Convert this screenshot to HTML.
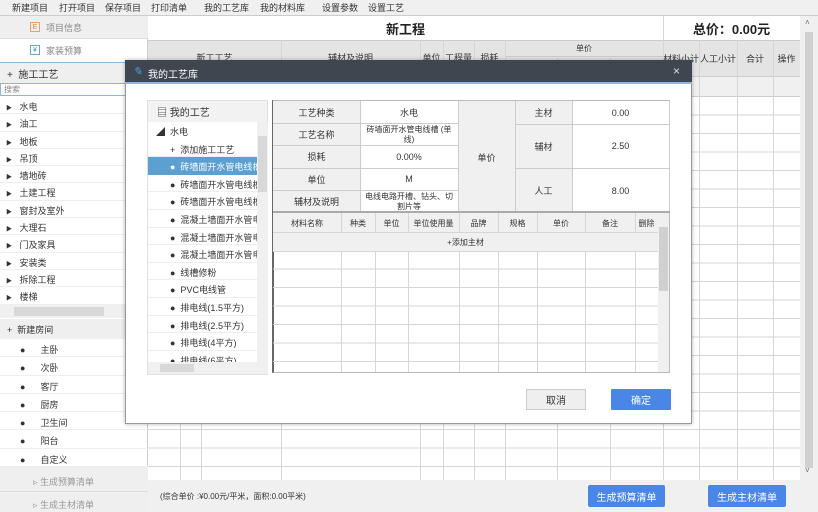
<!DOCTYPE html>
<html><head><meta charset="utf-8"><style>
*{margin:0;padding:0;box-sizing:border-box}
body{width:818px;height:512px;overflow:hidden;background:#fff;font-family:"Liberation Sans","Noto Sans CJK SC",sans-serif;font-size:9px;color:#333;position:relative}
.a{position:absolute}
.c{display:flex;align-items:center;justify-content:center;text-align:center}
.vl{position:absolute;width:1px;background:#d6d6d6}
.hl{position:absolute;height:1px;background:#d6d6d6}
.tr{font-size:6px}
</style></head><body>
<!-- toolbar -->
<div class="a" style="left:0;top:0;width:818px;height:16px;background:#f0f0f0;border-bottom:1px solid #ccc"></div>
<div class="a" style="top:1px;left:0;font-size:9px;color:#333;white-space:nowrap">
<span class="a" style="left:12px">新建项目</span><span class="a" style="left:59px">打开项目</span><span class="a" style="left:105px">保存项目</span><span class="a" style="left:151px">打印清单</span><span class="a" style="left:204px">我的工艺库</span><span class="a" style="left:260px">我的材料库</span><span class="a" style="left:322px">设置参数</span><span class="a" style="left:368px">设置工艺</span></div>
<!-- left sidebar -->
<div class="a" style="left:0;top:16px;width:148px;height:496px;background:#fff;border-right:1px solid #ccc"></div>
<div class="a" style="left:0;top:16px;width:148px;height:23px;background:#efefef;border-bottom:1px solid #ddd"></div>
<div class="a c" style="left:30px;top:22px;width:10px;height:10px;border:1px solid #f0a060;color:#f08030;font-size:7px">E</div>
<div class="a" style="left:46px;top:21px;color:#888">项目信息</div>
<div class="a c" style="left:30px;top:45px;width:10px;height:10px;border:1px solid #6ab;color:#39c;font-size:7px">¥</div>
<div class="a" style="left:46px;top:44px;color:#888">家装预算</div>
<div class="a" style="left:0;top:62px;width:148px;height:21px;background:#efefef;border-top:1px solid #8ab8d8"></div>
<div class="a" style="left:7px;top:66px;font-size:10px">+&nbsp; 施工工艺</div>
<div class="a" style="left:0;top:83px;width:148px;height:13px;border:1px solid #8ab8d8;color:#888;font-size:8px;padding-left:3px">搜索</div>
<div class="a" style="left:0;top:97px;width:148px">
<div style="height:17.3px;border-bottom:1px solid #eee;padding:3px 0 0 6px"><span class="tr">▶</span> &nbsp;&nbsp;水电</div>
<div style="height:17.3px;border-bottom:1px solid #eee;padding:3px 0 0 6px"><span class="tr">▶</span> &nbsp;&nbsp;油工</div>
<div style="height:17.3px;border-bottom:1px solid #eee;padding:3px 0 0 6px"><span class="tr">▶</span> &nbsp;&nbsp;地板</div>
<div style="height:17.3px;border-bottom:1px solid #eee;padding:3px 0 0 6px"><span class="tr">▶</span> &nbsp;&nbsp;吊顶</div>
<div style="height:17.3px;border-bottom:1px solid #eee;padding:3px 0 0 6px"><span class="tr">▶</span> &nbsp;&nbsp;墙地砖</div>
<div style="height:17.3px;border-bottom:1px solid #eee;padding:3px 0 0 6px"><span class="tr">▶</span> &nbsp;&nbsp;土建工程</div>
<div style="height:17.3px;border-bottom:1px solid #eee;padding:3px 0 0 6px"><span class="tr">▶</span> &nbsp;&nbsp;窗封及室外</div>
<div style="height:17.3px;border-bottom:1px solid #eee;padding:3px 0 0 6px"><span class="tr">▶</span> &nbsp;&nbsp;大理石</div>
<div style="height:17.3px;border-bottom:1px solid #eee;padding:3px 0 0 6px"><span class="tr">▶</span> &nbsp;&nbsp;门及家具</div>
<div style="height:17.3px;border-bottom:1px solid #eee;padding:3px 0 0 6px"><span class="tr">▶</span> &nbsp;&nbsp;安装类</div>
<div style="height:17.3px;border-bottom:1px solid #eee;padding:3px 0 0 6px"><span class="tr">▶</span> &nbsp;&nbsp;拆除工程</div>
<div style="height:17.3px;border-bottom:1px solid #eee;padding:3px 0 0 6px"><span class="tr">▶</span> &nbsp;&nbsp;楼梯</div>
</div>
<div class="a" style="left:0;top:305px;width:148px;height:13px;background:#f0f0f0"></div>
<div class="a" style="left:14px;top:307px;width:90px;height:9px;background:#d8d8d8"></div>
<div class="a" style="left:0;top:319px;width:148px;height:20px;background:#efefef"></div>
<div class="a" style="left:7px;top:323px;font-size:9px">+&nbsp; 新建房间</div>
<div class="a" style="left:0;top:339px;width:148px">
<div style="height:18.3px;border-bottom:1px solid #eee;padding:4px 0 0 20px">● &nbsp;&nbsp;&nbsp;&nbsp;&nbsp;主卧</div>
<div style="height:18.3px;border-bottom:1px solid #eee;padding:4px 0 0 20px">● &nbsp;&nbsp;&nbsp;&nbsp;&nbsp;次卧</div>
<div style="height:18.3px;border-bottom:1px solid #eee;padding:4px 0 0 20px">● &nbsp;&nbsp;&nbsp;&nbsp;&nbsp;客厅</div>
<div style="height:18.3px;border-bottom:1px solid #eee;padding:4px 0 0 20px">● &nbsp;&nbsp;&nbsp;&nbsp;&nbsp;厨房</div>
<div style="height:18.3px;border-bottom:1px solid #eee;padding:4px 0 0 20px">● &nbsp;&nbsp;&nbsp;&nbsp;&nbsp;卫生间</div>
<div style="height:18.3px;border-bottom:1px solid #eee;padding:4px 0 0 20px">● &nbsp;&nbsp;&nbsp;&nbsp;&nbsp;阳台</div>
<div style="height:18.3px;border-bottom:1px solid #eee;padding:4px 0 0 20px">● &nbsp;&nbsp;&nbsp;&nbsp;&nbsp;自定义</div>
</div>
<div class="a" style="left:0;top:467px;width:148px;height:45px;background:#efefef"></div>
<div class="a" style="left:0;top:491px;width:148px;height:1px;background:#ddd"></div>
<div class="a" style="left:33px;top:475px;color:#999">▹ 生成预算清单</div>
<div class="a" style="left:33px;top:498px;color:#999">▹ 生成主材清单</div>
<!-- main table -->
<div class="a c" style="left:148px;top:16px;width:515px;height:24px;font-size:13px;font-weight:bold;color:#222">新工程</div>
<div class="a c" style="left:663px;top:16px;width:137px;height:24px;font-size:13px;font-weight:bold;color:#222">总价：0.00元</div>
<div class="a" style="left:148px;top:40px;width:652px;height:37px;background:#e4e4e4;border-top:1px solid #ccc;border-bottom:1px solid #ccc"></div>
<div class="a" style="left:148px;top:77px;width:652px;height:20px;background:#f0f0f0;border-bottom:1px solid #ccc"></div>
<div class="a c" style="left:148px;top:50px;width:133px;height:14px">新工工艺</div>
<div class="a c" style="left:281px;top:50px;width:139px;height:14px">辅材及说明</div>
<div class="a c" style="left:420px;top:50px;width:23px;height:14px">单位</div>
<div class="a c" style="left:443px;top:50px;width:31px;height:14px">工程量</div>
<div class="a c" style="left:474px;top:50px;width:31px;height:14px">损耗</div>
<div class="hl" style="left:505px;top:56px;width:158px;background:#ccc"></div>
<div class="a c" style="left:663px;top:40px;width:36px;height:37px">材料小计</div>
<div class="a c" style="left:699px;top:40px;width:38px;height:37px">人工小计</div>
<div class="a c" style="left:737px;top:40px;width:36px;height:37px">合计</div>
<div class="a c" style="left:773px;top:40px;width:27px;height:37px">操作</div>
<div class="a c" style="left:505px;top:42px;width:158px;height:12px;font-size:8px">单价</div>
<div class="vl" style="left:281px;top:40px;height:440px"></div>
<div class="vl" style="left:420px;top:40px;height:440px"></div>
<div class="vl" style="left:443px;top:40px;height:440px"></div>
<div class="vl" style="left:474px;top:40px;height:440px"></div>
<div class="vl" style="left:505px;top:40px;height:440px"></div>
<div class="vl" style="left:663px;top:16px;height:464px"></div>
<div class="vl" style="left:699px;top:40px;height:440px"></div>
<div class="vl" style="left:737px;top:40px;height:440px"></div>
<div class="vl" style="left:773px;top:40px;height:440px"></div>
<div class="vl" style="left:180px;top:97px;height:383px"></div>
<div class="vl" style="left:201px;top:97px;height:383px"></div>
<div class="vl" style="left:557px;top:56px;height:424px"></div>
<div class="vl" style="left:610px;top:56px;height:424px"></div>
<div class="a" style="left:148px;top:97px;width:652px;height:383px;background:repeating-linear-gradient(to bottom,transparent 0,transparent 17.5px,#d6d6d6 17.5px,#d6d6d6 18.5px)"></div>
<!-- right scrollbar -->
<div class="a" style="left:800px;top:16px;width:18px;height:464px;background:#f0f0f0"></div>
<div class="a" style="left:805px;top:32px;width:8px;height:436px;background:#d0d0d0"></div>
<div class="a" style="left:805px;top:18px;font-size:8px;color:#666">˄</div>
<div class="a" style="left:805px;top:466px;font-size:8px;color:#666">˅</div>
<!-- bottom bar -->
<div class="a" style="left:148px;top:480px;width:670px;height:32px;background:#f0f0f0"></div>
<div class="a" style="left:160px;top:491px;font-size:8px;color:#333">(综合单价 :¥0.00元/平米，面积:0.00平米)</div>
<div class="a c" style="left:588px;top:485px;width:77px;height:22px;background:#4a86e8;color:#fff;font-size:10px;border-radius:2px">生成预算清单</div>
<div class="a c" style="left:708px;top:485px;width:78px;height:22px;background:#4a86e8;color:#fff;font-size:10px;border-radius:2px">生成主材清单</div>
<!-- dialog -->
<div class="a" style="left:125px;top:60px;width:567px;height:364px;background:#fff;border:1px solid #999;box-shadow:0 0 4px rgba(0,0,0,.3)"></div>
<div class="a" style="left:125px;top:60px;width:567px;height:24px;background:#3f4650;border-bottom:2px solid #8fb8dc"></div>
<div class="a" style="left:133px;top:65px;color:#4aa3e8;font-size:11px;font-style:italic">✎</div>
<div class="a" style="left:148px;top:66px;color:#fff;font-size:10px">我的工艺库</div>
<div class="a" style="left:673px;top:64px;color:#ddd;font-size:12px">×</div>
<!-- dialog left tree -->
<div class="a" style="left:147px;top:100px;width:121px;height:275px;background:#f2f2f2;border:1px solid #e0e0e0"></div>
<div class="a" style="left:157px;top:104px;font-size:10px;color:#333">▤ 我的工艺</div>
<div class="a" style="left:148px;top:122px;width:109px;height:240px;background:#fff;overflow:hidden;font-size:9px">
<div style="height:17.6px;padding:3px 0 0 8px">◢ &nbsp;水电</div>
<div style="height:17.6px;padding:3px 0 0 22px;border-bottom:1px solid #eee">+ &nbsp;添加施工工艺</div>
<div style="height:17.6px;padding:3px 0 0 22px;background:#5ba0d0;color:#fff;white-space:nowrap">● &nbsp;砖墙面开水管电线槽</div>
<div style="height:17.6px;padding:3px 0 0 22px;border-bottom:1px solid #eee;white-space:nowrap">● &nbsp;砖墙面开水管电线槽</div>
<div style="height:17.6px;padding:3px 0 0 22px;border-bottom:1px solid #eee;white-space:nowrap">● &nbsp;砖墙面开水管电线槽</div>
<div style="height:17.6px;padding:3px 0 0 22px;border-bottom:1px solid #eee;white-space:nowrap">● &nbsp;混凝土墙面开水管电</div>
<div style="height:17.6px;padding:3px 0 0 22px;border-bottom:1px solid #eee;white-space:nowrap">● &nbsp;混凝土墙面开水管电</div>
<div style="height:17.6px;padding:3px 0 0 22px;border-bottom:1px solid #eee;white-space:nowrap">● &nbsp;混凝土墙面开水管电</div>
<div style="height:17.6px;padding:3px 0 0 22px;border-bottom:1px solid #eee">● &nbsp;线槽修粉</div>
<div style="height:17.6px;padding:3px 0 0 22px;border-bottom:1px solid #eee">● &nbsp;PVC电线管</div>
<div style="height:17.6px;padding:3px 0 0 22px;border-bottom:1px solid #eee">● &nbsp;排电线(1.5平方)</div>
<div style="height:17.6px;padding:3px 0 0 22px;border-bottom:1px solid #eee">● &nbsp;排电线(2.5平方)</div>
<div style="height:17.6px;padding:3px 0 0 22px;border-bottom:1px solid #eee">● &nbsp;排电线(4平方)</div>
<div style="height:17.6px;padding:3px 0 0 22px">● &nbsp;排电线(6平方)</div>
</div>
<div class="a" style="left:257px;top:122px;width:11px;height:240px;background:#f0f0f0"></div>
<div class="a" style="left:258px;top:136px;width:9px;height:56px;background:#d8d8d8"></div>
<div class="a" style="left:148px;top:362px;width:120px;height:12px;background:#f0f0f0"></div>
<div class="a" style="left:160px;top:364px;width:34px;height:8px;background:#d8d8d8"></div>
<!-- dialog right top table -->
<div class="a" style="left:272px;top:100px;width:398px;height:273px;border:1px solid #bbb;border-left:2px solid #666"></div>
<div class="a" style="left:273px;top:101px;width:87px;height:112px;background:#f0f0f0"></div>
<div class="a" style="left:458px;top:101px;width:57px;height:112px;background:#f0f0f0"></div>
<div class="a" style="left:515px;top:101px;width:57px;height:112px;background:#f0f0f0"></div>
<div class="a" style="left:669px;top:101px;width:1px;height:112px;background:#ccc"></div>
<div class="a c" style="left:273px;top:101px;width:87px;height:22px">工艺种类</div>
<div class="a c" style="left:273px;top:124px;width:87px;height:21px">工艺名称</div>
<div class="a c" style="left:273px;top:145px;width:87px;height:23px">损耗</div>
<div class="a c" style="left:273px;top:168px;width:87px;height:22px">单位</div>
<div class="a c" style="left:273px;top:190px;width:87px;height:23px">辅材及说明</div>
<div class="a c" style="left:360px;top:101px;width:98px;height:22px">水电</div>
<div class="a c" style="left:362px;top:124px;width:94px;height:21px;font-size:8px;line-height:10px">砖墙面开水管电线槽 (单线)</div>
<div class="a c" style="left:360px;top:145px;width:98px;height:23px">0.00%</div>
<div class="a c" style="left:360px;top:168px;width:98px;height:22px">M</div>
<div class="a c" style="left:363px;top:190px;width:92px;height:23px;font-size:8px;line-height:10px">电线电路开槽、钻头、切割片等</div>
<div class="a c" style="left:458px;top:101px;width:57px;height:112px">单价</div>
<div class="a c" style="left:515px;top:101px;width:57px;height:23px">主材</div>
<div class="a c" style="left:515px;top:124px;width:57px;height:44px">辅材</div>
<div class="a c" style="left:515px;top:168px;width:57px;height:45px">人工</div>
<div class="a c" style="left:572px;top:101px;width:97px;height:23px">0.00</div>
<div class="a c" style="left:572px;top:124px;width:97px;height:44px">2.50</div>
<div class="a c" style="left:572px;top:168px;width:97px;height:45px">8.00</div>
<div class="hl" style="left:273px;top:123px;width:185px;background:#ccc"></div>
<div class="hl" style="left:273px;top:145px;width:185px;background:#ccc"></div>
<div class="hl" style="left:273px;top:168px;width:185px;background:#ccc"></div>
<div class="hl" style="left:273px;top:190px;width:185px;background:#ccc"></div>
<div class="hl" style="left:515px;top:124px;width:154px;background:#ccc"></div>
<div class="hl" style="left:515px;top:168px;width:154px;background:#ccc"></div>
<div class="vl" style="left:360px;top:101px;height:112px;background:#ccc"></div>
<div class="vl" style="left:458px;top:101px;height:112px;background:#ccc"></div>
<div class="vl" style="left:515px;top:101px;height:112px;background:#ccc"></div>
<div class="vl" style="left:572px;top:101px;height:112px;background:#ccc"></div>
<div class="a" style="left:273px;top:211px;width:397px;height:2px;background:#aaa"></div>
<!-- lower table -->
<div class="a" style="left:273px;top:213px;width:385px;height:38px;background:#f0f0f0"></div>
<div class="hl" style="left:273px;top:232px;width:385px"></div>
<div class="hl" style="left:273px;top:251px;width:385px"></div>
<div class="a" style="left:273px;top:213px;height:20px;width:385px;font-size:8px">
<span class="a c" style="left:0;width:68px;height:20px">材料名称</span><span class="a c" style="left:68px;width:34px;height:20px">种类</span><span class="a c" style="left:102px;width:33px;height:20px">单位</span><span class="a c" style="left:135px;width:51px;height:20px">单位使用量</span><span class="a c" style="left:186px;width:39px;height:20px">品牌</span><span class="a c" style="left:225px;width:39px;height:20px">规格</span><span class="a c" style="left:264px;width:48px;height:20px">单价</span><span class="a c" style="left:312px;width:50px;height:20px">备注</span><span class="a c" style="left:362px;width:23px;height:20px">删除</span></div>
<div class="a c" style="left:273px;top:233px;width:385px;height:18px;font-size:8px">+添加主材</div>
<div class="a" style="left:273px;top:251px;width:385px;height:121px;background:repeating-linear-gradient(to bottom,transparent 0,transparent 17.5px,#d6d6d6 17.5px,#d6d6d6 18.5px)"></div>
<div class="vl" style="left:341px;top:213px;height:20px"></div><div class="vl" style="left:341px;top:251px;height:121px"></div>
<div class="vl" style="left:375px;top:213px;height:20px"></div><div class="vl" style="left:375px;top:251px;height:121px"></div>
<div class="vl" style="left:408px;top:213px;height:20px"></div><div class="vl" style="left:408px;top:251px;height:121px"></div>
<div class="vl" style="left:459px;top:213px;height:20px"></div><div class="vl" style="left:459px;top:251px;height:121px"></div>
<div class="vl" style="left:498px;top:213px;height:20px"></div><div class="vl" style="left:498px;top:251px;height:121px"></div>
<div class="vl" style="left:537px;top:213px;height:20px"></div><div class="vl" style="left:537px;top:251px;height:121px"></div>
<div class="vl" style="left:585px;top:213px;height:20px"></div><div class="vl" style="left:585px;top:251px;height:121px"></div>
<div class="vl" style="left:635px;top:213px;height:20px"></div><div class="vl" style="left:635px;top:251px;height:121px"></div>
<div class="a" style="left:658px;top:213px;width:11px;height:159px;background:#f0f0f0"></div>
<div class="a" style="left:659px;top:227px;width:9px;height:64px;background:#d0d0d0"></div>
<!-- dialog buttons -->
<div class="a c" style="left:526px;top:389px;width:60px;height:21px;background:#efefef;border:1px solid #ccc;font-size:10px">取消</div>
<div class="a c" style="left:611px;top:389px;width:60px;height:21px;background:#4a86e8;color:#fff;font-size:10px;border-radius:1px">确定</div>
</body></html>
